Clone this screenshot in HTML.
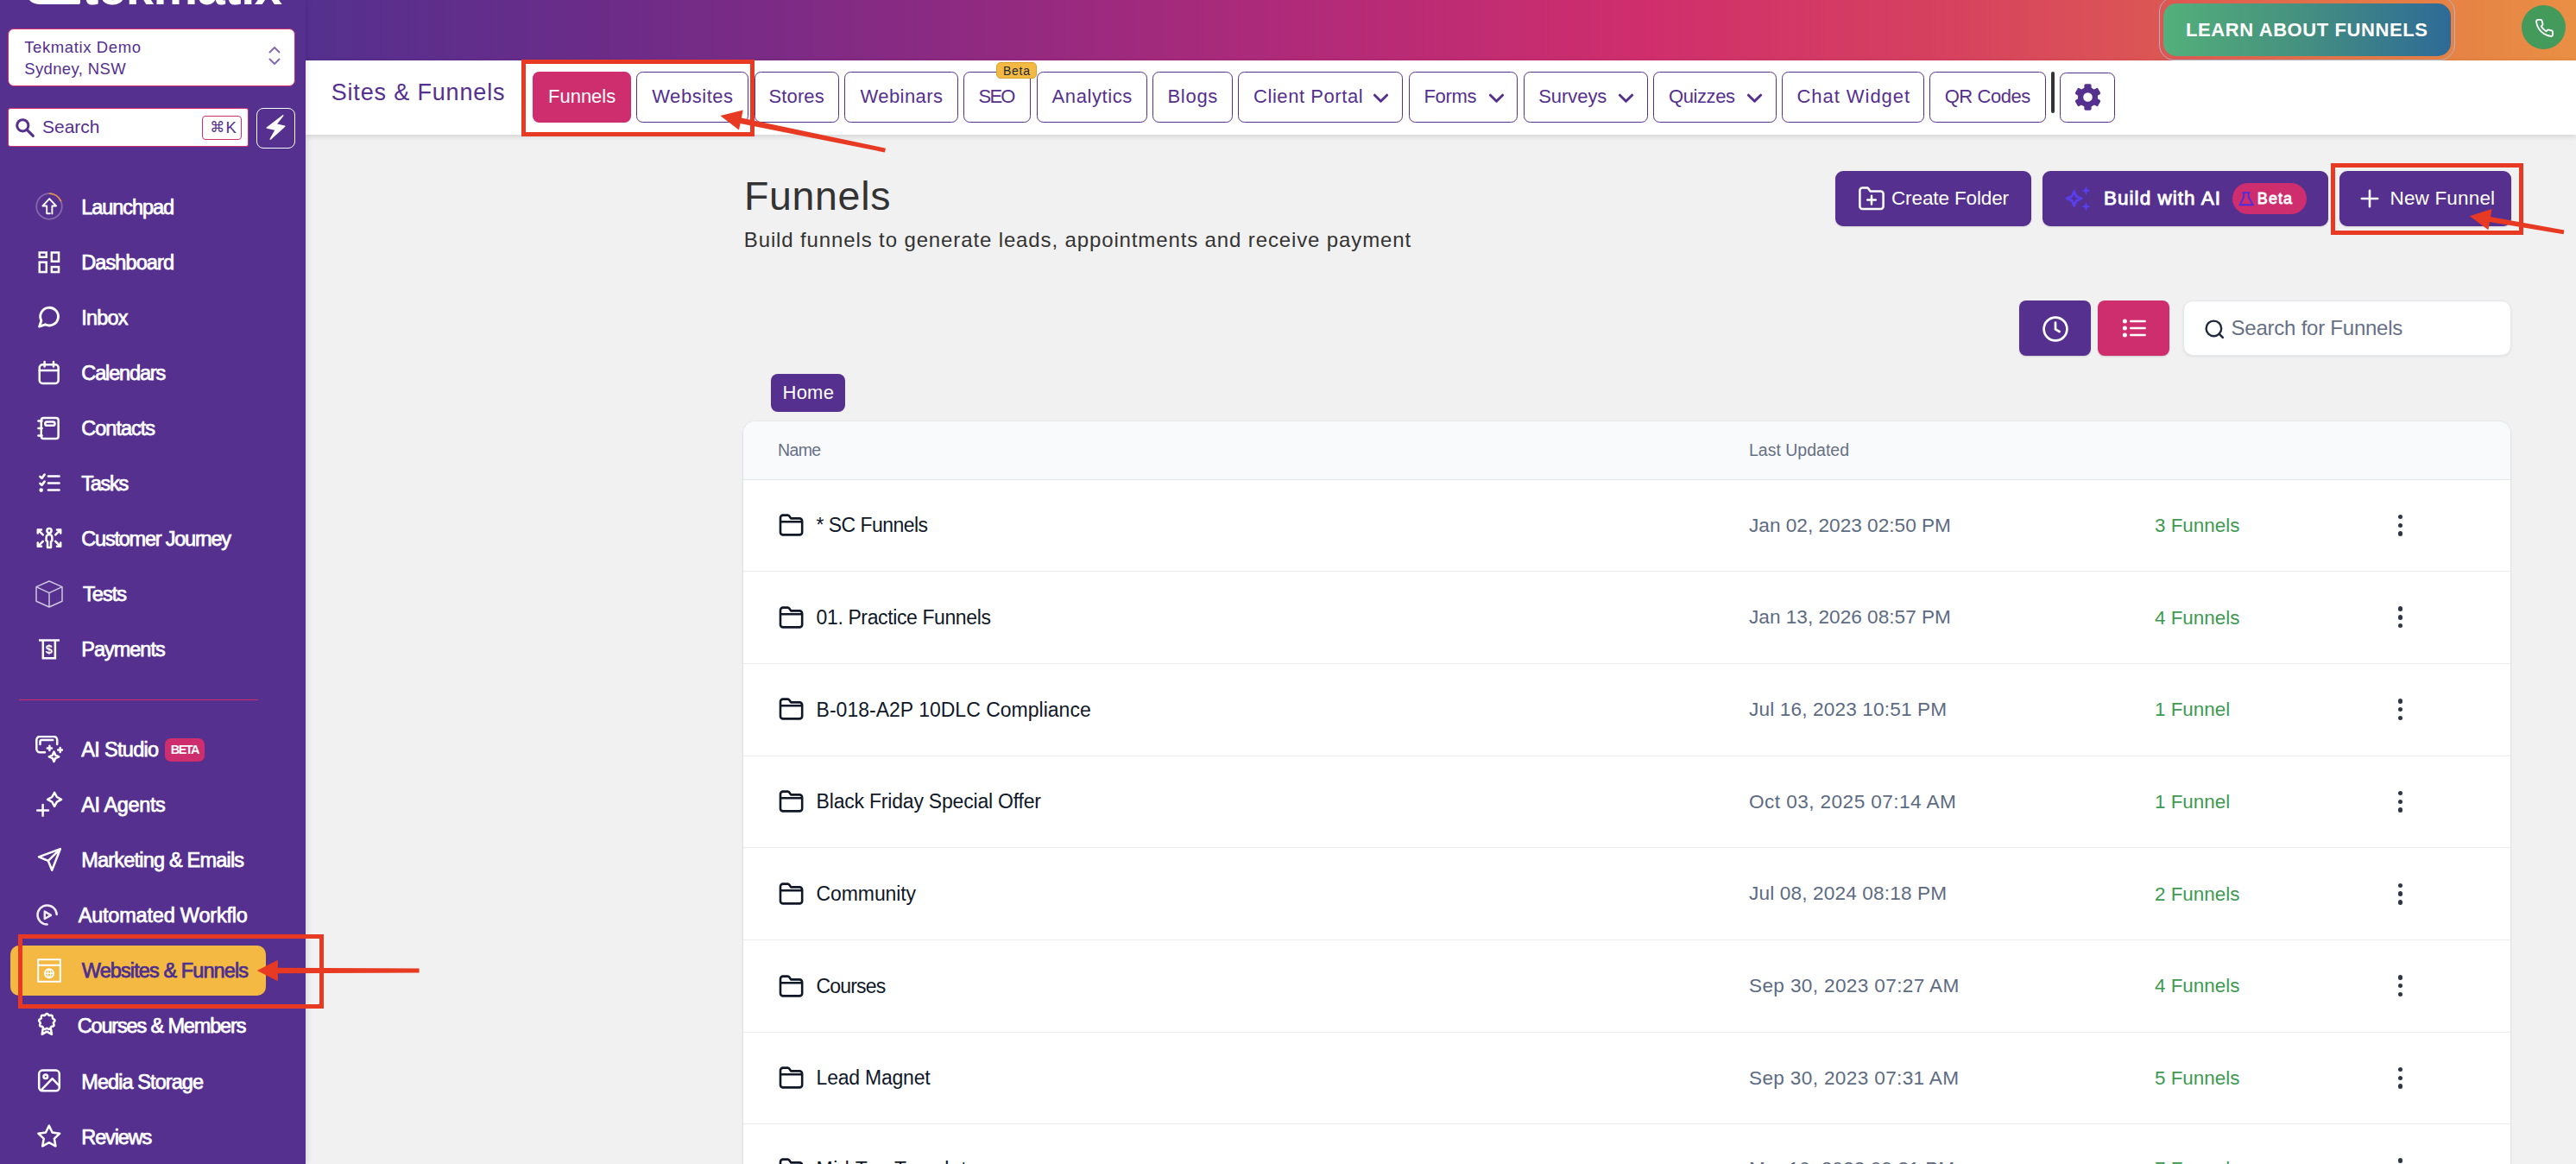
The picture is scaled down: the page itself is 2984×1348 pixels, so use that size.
<!DOCTYPE html>
<html lang="en"><head><meta charset="utf-8"><title>Funnels</title><style>
html,body{margin:0;padding:0}
body{width:2984px;height:1348px;overflow:hidden;position:relative;background:#f1f1f1;
font-family:"Liberation Sans",sans-serif}
.b{position:absolute;box-sizing:border-box;display:block}
.t{position:absolute;white-space:pre;display:block}
</style></head><body>
<div class="b" style="left:0.00px;top:0.00px;width:2984.00px;height:70.00px;background:linear-gradient(90deg,#55308e 0px,#55308e 354px,#6b2c88 700px,#8b2a82 1080px,#b02a79 1500px,#cf2e6c 1900px,#d6415f 2250px,#dc5654 2500px,#e47a46 2750px,#e98f44 2984px)"></div>
<div class="b" style="left:354.00px;top:70.00px;width:2630.00px;height:86.00px;background:#fff;box-shadow:0 2px 6px rgba(0,0,0,.13)"></div>
<div class="b" style="left:0.00px;top:0.00px;width:354.00px;height:1348.00px;background:#55308e;box-shadow:2px 0 6px rgba(0,0,0,.10)"></div>
<div class="b" style="left:30.00px;top:-20.00px;width:63.00px;height:25.20px;background:#fff;border-radius:0 0 2px 15px"></div>
<span class="t" style="left:95.00px;top:-43.80px;font-size:58px;line-height:58px;letter-spacing:-0.464px;color:#fff;font-weight:bold;">tekmatix</span>
<div class="b" style="left:9.00px;top:33.00px;width:333.20px;height:67.20px;background:#fff;border:1.5px solid #ce2d6e;border-radius:7px"></div>
<span class="t" style="left:28.20px;top:45.66px;font-size:18.5px;line-height:18.5px;letter-spacing:0.608px;color:#55308e;">Tekmatix Demo</span>
<span class="t" style="left:28.20px;top:71.06px;font-size:18.5px;line-height:18.5px;letter-spacing:0.365px;color:#55308e;">Sydney, NSW</span>
<svg class="b" style="left:309.00px;top:50.00px;" width="18.00" height="29.00" viewBox="0 0 18 29"><path d="M3.5 10.5 L9 5 L14.5 10.5 M3.5 18.5 L9 24 L14.5 18.5" fill="none" stroke="#8466b3" stroke-width="1.9" stroke-linecap="round" stroke-linejoin="round"/></svg>
<div class="b" style="left:9.00px;top:125.00px;width:279.20px;height:45.10px;background:#fff;border:1.5px solid #ce2d6e;border-radius:3px"></div>
<svg class="b" style="left:17.00px;top:135.50px;" width="24.00" height="24.00" viewBox="0 0 24 24"><circle cx="9.3" cy="9.3" r="6.6" fill="none" stroke="#55308e" stroke-width="3"/><path d="M14.3 14.3 L21.3 21.3" stroke="#55308e" stroke-width="3.2" stroke-linecap="round"/></svg>
<span class="t" style="left:49.00px;top:136.04px;font-size:21px;line-height:21px;letter-spacing:0.000px;color:#55308e;">Search</span>
<div class="b" style="left:234.00px;top:134.00px;width:46.00px;height:27.60px;border:1.3px solid #ce2d6e;border-radius:4px;background:#fff"></div>
<span class="t" style="left:243.2px;top:137.2px;font-size:17px;line-height:21px;color:#55308e;font-family:'DejaVu Sans',sans-serif">⌘</span>
<span class="t" style="left:261.60px;top:138.86px;font-size:18.5px;line-height:18.5px;letter-spacing:-1.050px;color:#55308e;">K</span>
<div class="b" style="left:297.00px;top:125.20px;width:44.70px;height:46.60px;border:1.5px solid #fff;border-radius:8px;background:#55308e"></div>
<svg class="b" style="left:306.00px;top:132.00px;" width="27.00" height="33.00" viewBox="0 0 27 33"><path d="M21.8 1.8 L3.2 16 L13.4 18.2 L7.2 29.2 L23.8 14.2 L13.8 12 Z" fill="#fff" stroke="#fff" stroke-width="1.4" stroke-linejoin="round"/></svg>
<div class="b" style="left:2501.00px;top:-4.00px;width:343.00px;height:74.00px;border:1.2px solid rgba(170,190,215,.85);border-radius:18px"></div>
<div class="b" style="left:2505.60px;top:4.20px;width:333.80px;height:61.00px;border-radius:15px;background:linear-gradient(90deg,#53b07b,#46927f 45%,#2e6a97)"></div>
<span class="t" style="left:2532.00px;top:23.75px;font-size:22px;line-height:22px;letter-spacing:0.597px;color:#fff;font-weight:bold;">LEARN ABOUT FUNNELS</span>
<div class="b" style="left:2921.00px;top:5.80px;width:51.20px;height:51.20px;border-radius:50%;background:#439a5b"></div>
<svg class="b" style="left:2935.60px;top:20.60px;" width="23.00" height="23.00" viewBox="0 0 24 24"><path d="M22 16.92v3a2 2 0 0 1-2.18 2 19.79 19.79 0 0 1-8.63-3.07 19.5 19.5 0 0 1-6-6 19.79 19.79 0 0 1-3.07-8.67A2 2 0 0 1 4.11 2h3a2 2 0 0 1 2 1.72 12.84 12.84 0 0 0 .7 2.81 2 2 0 0 1-.45 2.11L8.09 9.91a16 16 0 0 0 6 6l1.27-1.27a2 2 0 0 1 2.11-.45 12.84 12.84 0 0 0 2.81.7A2 2 0 0 1 22 16.92z" fill="none" stroke="#fff" stroke-width="1.9" stroke-linejoin="round" transform="rotate(0 12 12)"/></svg>
<div class="b" style="left:11.90px;top:1095.20px;width:296.10px;height:57.70px;background:#f4b942;border-radius:10px"></div>
<div class="b" style="left:22.00px;top:809.70px;width:277.00px;height:1.40px;background:#ce2d6e"></div>
<svg class="b" style="left:40.70px;top:223.20px;" width="32.00" height="32.00" viewBox="0 0 32 32"><circle cx="16" cy="16" r="14.8" fill="none" stroke="rgba(255,255,255,.28)" stroke-width="1.8"/><path d="M16 1.2 A14.8 14.8 0 0 1 29.6 10.2" fill="none" stroke="#e8913f" stroke-width="1.8"/><path d="M16.2 7.2 L8.4 15.5 H13.2 V24.3 H16.9 M16.2 7.2 L24 15.5 H19.4 V24.6" fill="none" stroke="#fff" stroke-width="1.9" stroke-linejoin="round" stroke-linecap="round"/></svg>
<svg class="b" style="left:40.70px;top:287.50px;" width="32.00" height="32.00" viewBox="0 0 32 32"><g fill="none" stroke="#fff" stroke-width="2.5" stroke-linecap="butt" stroke-linejoin="miter"><rect x="4.75" y="4.45" width="8" height="5.3"/><rect x="18.85" y="4.45" width="8.2" height="10.3"/><rect x="4.75" y="15.65" width="8" height="11.4"/><rect x="18.85" y="21.15" width="8.2" height="5.9"/></g></svg>
<svg class="b" style="left:40.70px;top:351.40px;" width="32.00" height="32.00" viewBox="0 0 32 32"><path transform="translate(2.3,1.8) scale(1.15)" d="M7.9 20A9 9 0 1 0 4 16.1L2 22Z" fill="none" stroke="#fff" stroke-width="2.5" stroke-linecap="round" stroke-linejoin="round" stroke-width="2.2"/></svg>
<svg class="b" style="left:40.70px;top:415.90px;" width="32.00" height="32.00" viewBox="0 0 32 32"><g fill="none" stroke="#fff" stroke-width="2.5" stroke-linecap="round" stroke-linejoin="round"><rect x="4.75" y="6.3" width="21.9" height="21.6" rx="3.5"/><path d="M4.75 13 H26.65 M10.6 3 V8.4 M21 3 V8.4"/></g></svg>
<svg class="b" style="left:40.70px;top:479.60px;" width="32.00" height="32.00" viewBox="0 0 32 32"><g fill="none" stroke="#fff" stroke-width="2.5" stroke-linecap="round" stroke-linejoin="round"><rect x="6.75" y="3.95" width="19.9" height="24.1" rx="2.8"/><path d="M3.4 7.6 H7.6 M3.4 16 H7.6 M3.4 24.4 H7.6"/><rect x="11.3" y="8.4" width="11.2" height="4.4" rx="2.1"/></g></svg>
<svg class="b" style="left:40.70px;top:543.70px;" width="32.00" height="32.00" viewBox="0 0 32 32"><g fill="none" stroke="#fff" stroke-width="2.5" stroke-linecap="round" stroke-linejoin="round" stroke-width="3"><path d="M14.9 7.5 H27.6 M14.9 15.5 H27.6 M14.9 23.6 H27.6"/><path d="M5.4 7.9 L7.4 9.9 L10.6 5.6 M5.4 15.9 L7.4 17.9 L10.6 13.6" stroke-width="2.6"/></g><circle cx="6.7" cy="23.6" r="2.3" fill="#fff"/></svg>
<svg class="b" style="left:40.70px;top:607.80px;" width="32.00" height="32.00" viewBox="0 0 32 32"><g fill="none" stroke="#fff" stroke-width="2.5" stroke-linecap="round" stroke-linejoin="round" stroke-width="2.3"><circle cx="16" cy="6.6" r="2.6"/><path d="M12.6 18.2 V14.4 A3.4 3.4 0 0 1 19.4 14.4 V18.2 L18 19 V26 H14 V19 Z"/><path d="M2.8 9.6 V5.4 H7 M2.8 5.4 L8.8 11.4 M29.2 9.6 V5.4 H25 M29.2 5.4 L23.2 11.4 M2.8 20.6 V24.8 H7 M2.8 24.8 L8.8 18.8 M29.2 20.6 V24.8 H25 M29.2 24.8 L23.2 18.8"/></g></svg>
<svg class="b" style="left:40.70px;top:672.10px;" width="32.00" height="32.00" viewBox="0 0 32 32"><path d="M16 1 L31 7.6 V24.2 L16 31 L1 24.2 V7.6 Z M1 7.6 L16 14.6 L31 7.6 M16 14.6 V31" fill="none" stroke="rgba(255,255,255,.72)" stroke-width="1.5" stroke-linejoin="round"/></svg>
<svg class="b" style="left:40.70px;top:736.00px;" width="32.00" height="32.00" viewBox="0 0 32 32"><g fill="none" stroke="#fff" stroke-width="2.5" stroke-linecap="butt" stroke-linejoin="miter"><path d="M4 5.4 H28 M8.8 5.4 V26.2 H22.9 V5.4"/></g><text x="15.9" y="20.8" font-family="Liberation Sans,sans-serif" font-weight="bold" font-size="14.5" text-anchor="middle" fill="#fff">$</text></svg>
<span class="t" style="left:94.30px;top:228.52px;font-size:23.5px;line-height:23.5px;letter-spacing:-1.069px;color:#fff;-webkit-text-stroke:0.75px #fff;">Launchpad</span>
<span class="t" style="left:94.30px;top:292.62px;font-size:23.5px;line-height:23.5px;letter-spacing:-0.912px;color:#fff;-webkit-text-stroke:0.75px #fff;">Dashboard</span>
<span class="t" style="left:94.30px;top:356.72px;font-size:23.5px;line-height:23.5px;letter-spacing:-0.850px;color:#fff;-webkit-text-stroke:0.75px #fff;">Inbox</span>
<span class="t" style="left:94.30px;top:420.82px;font-size:23.5px;line-height:23.5px;letter-spacing:-1.138px;color:#fff;-webkit-text-stroke:0.75px #fff;">Calendars</span>
<span class="t" style="left:94.30px;top:484.92px;font-size:23.5px;line-height:23.5px;letter-spacing:-1.007px;color:#fff;-webkit-text-stroke:0.75px #fff;">Contacts</span>
<span class="t" style="left:94.30px;top:549.02px;font-size:23.5px;line-height:23.5px;letter-spacing:-1.275px;color:#fff;-webkit-text-stroke:0.75px #fff;">Tasks</span>
<span class="t" style="left:94.30px;top:613.12px;font-size:23.5px;line-height:23.5px;letter-spacing:-1.220px;color:#fff;-webkit-text-stroke:0.75px #fff;">Customer Journey</span>
<span class="t" style="left:95.90px;top:677.22px;font-size:23.5px;line-height:23.5px;letter-spacing:-0.913px;color:#fff;-webkit-text-stroke:0.75px #fff;">Tests</span>
<span class="t" style="left:94.30px;top:741.32px;font-size:23.5px;line-height:23.5px;letter-spacing:-1.014px;color:#fff;-webkit-text-stroke:0.75px #fff;">Payments</span>
<svg class="b" style="left:40.70px;top:851.60px;" width="32.00" height="32.00" viewBox="0 0 32 32"><g fill="none" stroke="#fff" stroke-width="2.5" stroke-linecap="round" stroke-linejoin="round" stroke-width="1.75"><path d="M11 19.2 H5.3 A4 4 0 0 1 1.3 15.2 V4.9 A4 4 0 0 1 5.3 0.9 H21.2 A4 4 0 0 1 25.2 4.9 V10"/><path d="M20.2 5.1 H7.3 A1.8 1.8 0 0 0 5.5 6.9 V10"/><path d="M21.5 18.6 L23.2 22.6 L27.2 24.3 L23.2 26 L21.5 30 L19.8 26 L15.8 24.3 L19.8 22.6 Z"/><path d="M16.4 11.8 V17 M13.8 14.4 H19 M28.7 13.9 V19.1 M26.1 16.5 H31.3"/></g></svg>
<span class="t" style="left:94.30px;top:856.92px;font-size:23.5px;line-height:23.5px;letter-spacing:-0.694px;color:#fff;-webkit-text-stroke:0.75px #fff;">AI Studio</span>
<div class="b" style="left:191.20px;top:855.30px;width:45.40px;height:26.50px;background:#ce2d6e;border-radius:7px"></div>
<span class="t" style="left:197.80px;top:861.32px;font-size:14.5px;line-height:14.5px;letter-spacing:-1.567px;color:#fff;font-weight:bold;">BETA</span>
<svg class="b" style="left:40.70px;top:915.70px;" width="32.00" height="32.00" viewBox="0 0 32 32"><g fill="none" stroke="#fff" stroke-width="2.5" stroke-linecap="round" stroke-linejoin="round" stroke-width="2.5"><path d="M22.1 1.8 L24.9 7 L30.1 9.8 L24.9 12.6 L22.1 17.8 L19.3 12.6 L14.1 9.8 L19.3 7 Z"/><path d="M8.6 16 V28.8 M2.2 22.4 H15"/></g></svg>
<span class="t" style="left:94.30px;top:921.02px;font-size:23.5px;line-height:23.5px;letter-spacing:-0.388px;color:#fff;-webkit-text-stroke:0.75px #fff;">AI Agents</span>
<svg class="b" style="left:40.70px;top:979.80px;" width="32.00" height="32.00" viewBox="0 0 32 32"><path d="M28.8 3.2 L4 12.3 L14.8 16.8 L19.2 27.8 Z M28.8 3.2 L14.8 16.8" fill="none" stroke="#fff" stroke-width="2.5" stroke-linecap="round" stroke-linejoin="round" stroke-width="2.3"/></svg>
<span class="t" style="left:94.30px;top:985.12px;font-size:23.5px;line-height:23.5px;letter-spacing:-0.800px;color:#fff;-webkit-text-stroke:0.75px #fff;">Marketing &amp; Emails</span>
<svg class="b" style="left:38.70px;top:1043.90px;" width="32.00" height="32.00" viewBox="0 0 32 32"><g fill="none" stroke="#fff" stroke-width="2.5" stroke-linecap="round" stroke-linejoin="round" stroke-width="1.7" opacity=".92"><path d="M26.7 15 A11.1 11.1 0 1 0 15.6 26.6"/><path d="M12.8 11.6 L20 15.8 L12.8 20 Z"/></g></svg>
<span class="t" style="left:90.70px;top:1049.22px;font-size:23.5px;line-height:23.5px;letter-spacing:-0.200px;color:#fff;-webkit-text-stroke:0.75px #fff;">Automated Workflo</span>
<svg class="b" style="left:40.70px;top:1107.60px;" width="32.00" height="32.00" viewBox="0 0 32 32"><g fill="none" stroke="#fff" stroke-width="2"><rect x="3.2" y="3.2" width="25.6" height="25.6"/><path d="M3.2 9.8 H28.8"/><circle cx="16" cy="19.2" r="5"/><path d="M11 19.2 H21 M16 14.2 C13.4 17 13.4 21.4 16 24.2 C18.6 21.4 18.6 17 16 14.2" stroke-width="1.4"/></g></svg>
<span class="t" style="left:94.80px;top:1113.22px;font-size:23.5px;line-height:23.5px;letter-spacing:-0.906px;color:#4c2f91;-webkit-text-stroke:0.75px #4c2f91;">Websites &amp; Funnels</span>
<svg class="b" style="left:38.10px;top:1172.10px;" width="32.00" height="32.00" viewBox="0 0 32 32"><g fill="none" stroke="#fff" stroke-width="2.5" stroke-linecap="round" stroke-linejoin="round" stroke-width="2.1"><path d="M16.30 1.90 L16.78 2.00 L17.24 2.28 L17.65 2.68 L18.02 3.13 L18.35 3.54 L18.69 3.84 L19.06 4.00 L19.49 4.03 L19.99 3.95 L20.55 3.84 L21.13 3.77 L21.68 3.80 L22.15 3.98 L22.50 4.32 L22.71 4.79 L22.80 5.35 L22.81 5.93 L22.80 6.48 L22.83 6.96 L22.97 7.35 L23.24 7.66 L23.64 7.93 L24.12 8.20 L24.62 8.50 L25.06 8.85 L25.36 9.27 L25.48 9.75 L25.40 10.24 L25.15 10.74 L24.80 11.20 L24.43 11.63 L24.11 12.02 L23.91 12.41 L23.87 12.81 L23.96 13.25 L24.15 13.75 L24.35 14.29 L24.49 14.85 L24.51 15.38 L24.35 15.85 L24.03 16.22 L23.56 16.47 L23.00 16.63 L22.43 16.72 L21.91 16.81 L21.48 16.95 L21.15 17.19 L20.92 17.55 L20.73 18.02 L20.55 18.56 L20.32 19.10 L20.02 19.56 L19.63 19.87 L19.16 20.01 L18.65 19.96 L18.12 19.76 L17.61 19.47 L17.14 19.19 L16.71 18.98 L16.30 18.90 L15.89 18.98 L15.46 19.19 L14.99 19.47 L14.48 19.76 L13.95 19.96 L13.44 20.01 L12.97 19.87 L12.58 19.56 L12.28 19.10 L12.05 18.56 L11.87 18.02 L11.68 17.55 L11.45 17.19 L11.12 16.95 L10.69 16.81 L10.17 16.72 L9.60 16.63 L9.04 16.47 L8.57 16.22 L8.25 15.85 L8.09 15.38 L8.11 14.85 L8.25 14.29 L8.45 13.75 L8.64 13.25 L8.73 12.81 L8.69 12.41 L8.49 12.02 L8.17 11.63 L7.80 11.20 L7.45 10.74 L7.20 10.24 L7.12 9.75 L7.24 9.27 L7.54 8.85 L7.98 8.50 L8.48 8.20 L8.96 7.93 L9.36 7.66 L9.63 7.35 L9.77 6.96 L9.80 6.48 L9.79 5.93 L9.80 5.35 L9.89 4.79 L10.10 4.32 L10.45 3.98 L10.92 3.80 L11.47 3.77 L12.05 3.84 L12.61 3.95 L13.11 4.03 L13.54 4.00 L13.91 3.84 L14.25 3.54 L14.58 3.13 L14.95 2.68 L15.36 2.28 L15.82 2.00 Z"/><path d="M11.7 19.2 L10.7 25.8 L16.3 22.7 L21.9 25.8 L20.9 19.2"/></g></svg>
<span class="t" style="left:89.70px;top:1177.42px;font-size:23.5px;line-height:23.5px;letter-spacing:-1.153px;color:#fff;-webkit-text-stroke:0.75px #fff;">Courses &amp; Members</span>
<svg class="b" style="left:40.70px;top:1235.80px;" width="32.00" height="32.00" viewBox="0 0 32 32"><g fill="none" stroke="#fff" stroke-width="2.5" stroke-linecap="round" stroke-linejoin="round" stroke-width="2.3"><rect x="4.2" y="3.6" width="23.6" height="23.6" rx="4"/><circle cx="11.8" cy="10.8" r="2.3"/><path d="M7 26.2 L19.6 13.2 L27.6 21.4"/></g></svg>
<span class="t" style="left:94.30px;top:1241.52px;font-size:23.5px;line-height:23.5px;letter-spacing:-0.921px;color:#fff;-webkit-text-stroke:0.75px #fff;">Media Storage</span>
<svg class="b" style="left:40.70px;top:1300.30px;" width="32.00" height="32.00" viewBox="0 0 32 32"><path d="M15.8 3.6 L19.6 11.5 L28.2 12.7 L21.9 18.7 L23.4 27.3 L15.8 23.2 L8.2 27.3 L9.7 18.7 L3.4 12.7 L12 11.5 Z" fill="none" stroke="#fff" stroke-width="2.5" stroke-linecap="round" stroke-linejoin="round" stroke-width="2.3"/></svg>
<span class="t" style="left:94.30px;top:1305.62px;font-size:23.5px;line-height:23.5px;letter-spacing:-1.125px;color:#fff;-webkit-text-stroke:0.75px #fff;">Reviews</span>
<span class="t" style="left:383.70px;top:94.41px;font-size:27px;line-height:27px;letter-spacing:0.836px;color:#55308e;">Sites &amp; Funnels</span>
<div class="b" style="left:616.80px;top:83.00px;width:114.20px;height:59.00px;background:#ce2d6e;border-radius:7.5px"></div>
<span class="t" style="left:635.00px;top:100.55px;font-size:22px;line-height:22px;letter-spacing:-0.008px;color:#fff;">Funnels</span>
<div class="b" style="left:737.00px;top:83.00px;width:130.00px;height:59.00px;background:#fff;border:1.4px solid #55308e;border-radius:7.5px"></div>
<span class="t" style="left:755.20px;top:100.55px;font-size:22px;line-height:22px;letter-spacing:0.543px;color:#55308e;">Websites</span>
<div class="b" style="left:873.50px;top:83.00px;width:98.30px;height:59.00px;background:#fff;border:1.4px solid #55308e;border-radius:7.5px"></div>
<span class="t" style="left:890.50px;top:100.55px;font-size:22px;line-height:22px;letter-spacing:0.120px;color:#55308e;">Stores</span>
<div class="b" style="left:977.90px;top:83.00px;width:132.10px;height:59.00px;background:#fff;border:1.4px solid #55308e;border-radius:7.5px"></div>
<span class="t" style="left:996.50px;top:100.55px;font-size:22px;line-height:22px;letter-spacing:0.429px;color:#55308e;">Webinars</span>
<div class="b" style="left:1116.10px;top:83.00px;width:78.00px;height:59.00px;background:#fff;border:1.4px solid #55308e;border-radius:7.5px"></div>
<span class="t" style="left:1133.60px;top:100.55px;font-size:22px;line-height:22px;letter-spacing:-1.850px;color:#55308e;">SEO</span>
<div class="b" style="left:1201.00px;top:83.00px;width:127.80px;height:59.00px;background:#fff;border:1.4px solid #55308e;border-radius:7.5px"></div>
<span class="t" style="left:1218.60px;top:100.55px;font-size:22px;line-height:22px;letter-spacing:0.588px;color:#55308e;">Analytics</span>
<div class="b" style="left:1335.00px;top:83.00px;width:93.00px;height:59.00px;background:#fff;border:1.4px solid #55308e;border-radius:7.5px"></div>
<span class="t" style="left:1352.50px;top:100.55px;font-size:22px;line-height:22px;letter-spacing:0.700px;color:#55308e;">Blogs</span>
<div class="b" style="left:1434.00px;top:83.00px;width:191.00px;height:59.00px;background:#fff;border:1.4px solid #55308e;border-radius:7.5px"></div>
<span class="t" style="left:1452.00px;top:100.55px;font-size:22px;line-height:22px;letter-spacing:0.562px;color:#55308e;">Client Portal</span>
<svg class="b" style="left:1589.30px;top:106.00px;" width="21.00" height="15.00" viewBox="0 0 21 15"><path d="M3.4 4.2 L10.5 11.2 L17.6 4.2" fill="none" stroke="#55308e" stroke-width="3" stroke-linecap="round" stroke-linejoin="round"/></svg>
<div class="b" style="left:1632.00px;top:83.00px;width:126.00px;height:59.00px;background:#fff;border:1.4px solid #55308e;border-radius:7.5px"></div>
<span class="t" style="left:1649.40px;top:100.55px;font-size:22px;line-height:22px;letter-spacing:-0.312px;color:#55308e;">Forms</span>
<svg class="b" style="left:1722.60px;top:106.00px;" width="21.00" height="15.00" viewBox="0 0 21 15"><path d="M3.4 4.2 L10.5 11.2 L17.6 4.2" fill="none" stroke="#55308e" stroke-width="3" stroke-linecap="round" stroke-linejoin="round"/></svg>
<div class="b" style="left:1765.00px;top:83.00px;width:144.00px;height:59.00px;background:#fff;border:1.4px solid #55308e;border-radius:7.5px"></div>
<span class="t" style="left:1782.20px;top:100.55px;font-size:22px;line-height:22px;letter-spacing:-0.050px;color:#55308e;">Surveys</span>
<svg class="b" style="left:1873.30px;top:106.00px;" width="21.00" height="15.00" viewBox="0 0 21 15"><path d="M3.4 4.2 L10.5 11.2 L17.6 4.2" fill="none" stroke="#55308e" stroke-width="3" stroke-linecap="round" stroke-linejoin="round"/></svg>
<div class="b" style="left:1915.00px;top:83.00px;width:142.70px;height:59.00px;background:#fff;border:1.4px solid #55308e;border-radius:7.5px"></div>
<span class="t" style="left:1933.00px;top:100.55px;font-size:22px;line-height:22px;letter-spacing:-0.417px;color:#55308e;">Quizzes</span>
<svg class="b" style="left:2022.00px;top:106.00px;" width="21.00" height="15.00" viewBox="0 0 21 15"><path d="M3.4 4.2 L10.5 11.2 L17.6 4.2" fill="none" stroke="#55308e" stroke-width="3" stroke-linecap="round" stroke-linejoin="round"/></svg>
<div class="b" style="left:2064.00px;top:83.00px;width:164.70px;height:59.00px;background:#fff;border:1.4px solid #55308e;border-radius:7.5px"></div>
<span class="t" style="left:2081.50px;top:100.55px;font-size:22px;line-height:22px;letter-spacing:0.950px;color:#55308e;">Chat Widget</span>
<div class="b" style="left:2234.80px;top:83.00px;width:135.20px;height:59.00px;background:#fff;border:1.4px solid #55308e;border-radius:7.5px"></div>
<span class="t" style="left:2252.70px;top:100.55px;font-size:22px;line-height:22px;letter-spacing:-0.436px;color:#55308e;">QR Codes</span>
<div class="b" style="left:1154.00px;top:72.00px;width:46.70px;height:18.70px;background:#f4b942;border:1.2px solid #d9a030;border-radius:5px"></div>
<span class="t" style="left:1162.00px;top:74.96px;font-size:14px;line-height:14px;letter-spacing:0.733px;color:#1f2937;">Beta</span>
<div class="b" style="left:2376.00px;top:83.10px;width:4.20px;height:48.20px;background:#333;border-radius:2px"></div>
<div class="b" style="left:2386.00px;top:83.80px;width:63.80px;height:58.20px;background:#fff;border:1.4px solid #55308e;border-radius:7.5px"></div>
<svg class="b" style="left:2403.00px;top:97.20px;" width="31.00" height="31.00" viewBox="-15.5 -15.5 31 31"><rect x="-4.1" y="-15.2" width="8.2" height="8" rx="1.6" transform="rotate(0)" fill="#55308e"/><rect x="-4.1" y="-15.2" width="8.2" height="8" rx="1.6" transform="rotate(60)" fill="#55308e"/><rect x="-4.1" y="-15.2" width="8.2" height="8" rx="1.6" transform="rotate(120)" fill="#55308e"/><rect x="-4.1" y="-15.2" width="8.2" height="8" rx="1.6" transform="rotate(180)" fill="#55308e"/><rect x="-4.1" y="-15.2" width="8.2" height="8" rx="1.6" transform="rotate(240)" fill="#55308e"/><rect x="-4.1" y="-15.2" width="8.2" height="8" rx="1.6" transform="rotate(300)" fill="#55308e"/><circle r="8.4" fill="none" stroke="#55308e" stroke-width="6.2"/></svg>
<span class="t" style="left:861.90px;top:204.28px;font-size:46.5px;line-height:46.5px;letter-spacing:0.683px;color:#333;">Funnels</span>
<span class="t" style="left:861.80px;top:265.78px;font-size:24px;line-height:24px;letter-spacing:0.873px;color:#333;">Build funnels to generate leads, appointments and receive payment</span>
<div class="b" style="left:2126.00px;top:198.00px;width:227.30px;height:64.00px;background:#55308e;border-radius:9px;box-shadow:0 1px 2px rgba(0,0,0,.12)"></div>
<svg class="b" style="left:2152.00px;top:215.00px;" width="32.00" height="30.00" viewBox="0 0 32 30"><g fill="none" stroke="#fff" stroke-width="2.5" stroke-linecap="round" stroke-linejoin="round"><path d="M2.4 24 V5.4 A3 3 0 0 1 5.4 2.4 H11.6 L14.6 6.6 H26.6 A3 3 0 0 1 29.6 9.6 V24 A3 3 0 0 1 26.6 27 H5.4 A3 3 0 0 1 2.4 24 Z"/><path d="M16 11.8 V21.4 M11.2 16.6 H20.8"/></g></svg>
<span class="t" style="left:2191.00px;top:219.31px;font-size:22.5px;line-height:22.5px;letter-spacing:-0.125px;color:#fff;">Create Folder</span>
<div class="b" style="left:2366.00px;top:198.00px;width:331.00px;height:64.00px;background:#55308e;border-radius:9px;box-shadow:0 1px 2px rgba(0,0,0,.12)"></div>
<svg class="b" style="left:2390.00px;top:213.00px;" width="34.00" height="34.00" viewBox="0 0 34 34"><path d="M12.70 8.50 L15.19 14.41 L21.10 16.90 L15.19 19.39 L12.70 25.30 L10.21 19.39 L4.30 16.90 L10.21 14.41 Z" fill="none" stroke="#583fee" stroke-width="2.8" stroke-linejoin="round"/><path d="M26.40 2.50 L27.80 6.30 L31.60 7.70 L27.80 9.10 L26.40 12.90 L25.00 9.10 L21.20 7.70 L25.00 6.30 Z M26.40 21.00 L27.80 24.80 L31.60 26.20 L27.80 27.60 L26.40 31.40 L25.00 27.60 L21.20 26.20 L25.00 24.80 Z" fill="#583fee"/></svg>
<span class="t" style="left:2437.00px;top:219.31px;font-size:22.5px;line-height:22.5px;letter-spacing:1.033px;color:#fff;-webkit-text-stroke:0.9px #fff;">Build with AI</span>
<div class="b" style="left:2585.60px;top:211.90px;width:86.40px;height:36.00px;background:#ce2d6e;border-radius:18px"></div>
<svg class="b" style="left:2592.50px;top:220.50px;" width="18.00" height="20.00" viewBox="0 0 18 20"><path d="M4.4 2.1 H13.4 M6.1 2.1 V7.4 L1.7 16.2 H16.9 L11.7 7.4 V2.1" fill="none" stroke="#4a2fe0" stroke-width="1.9" stroke-linecap="butt" stroke-linejoin="miter"/></svg>
<span class="t" style="left:2614.80px;top:220.91px;font-size:18px;line-height:18px;letter-spacing:1.083px;color:#fff;-webkit-text-stroke:0.8px #fff;">Beta</span>
<div class="b" style="left:2709.80px;top:198.00px;width:199.20px;height:64.00px;background:#55308e;border-radius:9px;box-shadow:0 1px 2px rgba(0,0,0,.12)"></div>
<svg class="b" style="left:2732.00px;top:217.30px;" width="26.00" height="26.00" viewBox="0 0 26 26"><path d="M13 3.8 V22.2 M3.8 13 H22.2" stroke="#fff" stroke-width="2.6" stroke-linecap="round"/></svg>
<span class="t" style="left:2768.50px;top:219.31px;font-size:22.5px;line-height:22.5px;letter-spacing:0.167px;color:#fff;">New Funnel</span>
<div class="b" style="left:2339.00px;top:347.90px;width:83.00px;height:64.00px;background:#55308e;border-radius:8px;box-shadow:0 1px 2px rgba(0,0,0,.15)"></div>
<svg class="b" style="left:2365.00px;top:364.50px;" width="32.00" height="32.00" viewBox="0 0 32 32"><g fill="none" stroke="#fff" stroke-width="2.7" stroke-linecap="round" stroke-linejoin="round"><circle cx="16" cy="16" r="13.4"/><path d="M16 8.6 V16.4 L20.6 19"/></g></svg>
<div class="b" style="left:2430.00px;top:347.90px;width:83.00px;height:64.00px;background:#ce2d6e;border-radius:8px;box-shadow:0 1px 2px rgba(0,0,0,.15)"></div>
<svg class="b" style="left:2456.80px;top:365.30px;" width="32.00" height="30.00" viewBox="0 0 32 30"><path d="M11.2 7 H27.6 M11.2 15 H27.6 M11.2 23 H27.6" stroke="#fff" stroke-width="2.6" stroke-linecap="round"/><circle cx="4.4" cy="7" r="2.5" fill="#fff"/><circle cx="4.4" cy="15" r="2.5" fill="#fff"/><circle cx="4.4" cy="23" r="2.5" fill="#fff"/></svg>
<div class="b" style="left:2529.40px;top:347.90px;width:379.20px;height:63.70px;background:#fff;border:1px solid #e4e7ec;border-radius:11px;box-shadow:0 1px 3px rgba(16,24,40,.08)"></div>
<svg class="b" style="left:2552.00px;top:368.00px;" width="26.00" height="26.00" viewBox="0 0 26 26"><circle cx="12.4" cy="12.4" r="8.8" fill="none" stroke="#202b3d" stroke-width="2.4"/><path d="M18.6 18.6 L22.8 22.8" stroke="#202b3d" stroke-width="2.6" stroke-linecap="round"/></svg>
<span class="t" style="left:2584.60px;top:368.38px;font-size:24px;line-height:24px;letter-spacing:-0.238px;color:#667085;">Search for Funnels</span>
<div class="b" style="left:892.80px;top:433.00px;width:86.00px;height:43.80px;background:#55308e;border-radius:8px"></div>
<span class="t" style="left:906.50px;top:443.75px;font-size:22px;line-height:22px;letter-spacing:0.250px;color:#fff;">Home</span>
<div class="b" style="left:861.00px;top:487.80px;width:2047.30px;height:912.20px;background:#fff;border-radius:14px;box-shadow:0 1px 3px rgba(16,24,40,.10),0 0 0 1px rgba(16,24,40,.03)"></div>
<div class="b" style="left:861.00px;top:487.80px;width:2047.30px;height:68.20px;background:#f9fafb;border-radius:14px 14px 0 0;border-bottom:1px solid #e4e7ec"></div>
<span class="t" style="left:900.90px;top:511.67px;font-size:19.5px;line-height:19.5px;letter-spacing:-0.567px;color:#667085;">Name</span>
<span class="t" style="left:2026.00px;top:511.67px;font-size:19.5px;line-height:19.5px;letter-spacing:0.000px;color:#667085;">Last Updated</span>
<svg class="b" style="left:901.40px;top:593.10px;" width="31.20" height="30.00" viewBox="0 0 31.2 30"><path d="M3 23.4 V6.6 A3 3 0 0 1 6 3.6 H11.4 A2.4 2.4 0 0 1 13.4 4.7 L15.2 7.4 H25.2 A3 3 0 0 1 28.2 10.4 V23.4 A3 3 0 0 1 25.2 26.4 H6 A3 3 0 0 1 3 23.4 Z M3 11.2 H28.2" fill="none" stroke="#101828" stroke-width="2.6" stroke-linecap="round" stroke-linejoin="round"/></svg>
<span class="t" style="left:945.60px;top:597.36px;font-size:23px;line-height:23px;letter-spacing:-0.555px;color:#101828;">* SC Funnels</span>
<span class="t" style="left:2026.00px;top:597.76px;font-size:22.6px;line-height:22.6px;letter-spacing:0.013px;color:#5d6b82;">Jan 02, 2023 02:50 PM</span>
<span class="t" style="left:2496.00px;top:597.86px;font-size:22.4px;line-height:22.4px;letter-spacing:0.000px;color:#3d9a50;">3 Funnels</span>
<div class="b" style="left:2777.80px;top:595.80px;width:5.40px;height:5.40px;background:#2d3748;border-radius:50%"></div>
<div class="b" style="left:2777.80px;top:605.60px;width:5.40px;height:5.40px;background:#2d3748;border-radius:50%"></div>
<div class="b" style="left:2777.80px;top:615.40px;width:5.40px;height:5.40px;background:#2d3748;border-radius:50%"></div>
<div class="b" style="left:861.00px;top:661.18px;width:2047.30px;height:1.20px;background:#eaecf0"></div>
<svg class="b" style="left:901.40px;top:699.78px;" width="31.20" height="30.00" viewBox="0 0 31.2 30"><path d="M3 23.4 V6.6 A3 3 0 0 1 6 3.6 H11.4 A2.4 2.4 0 0 1 13.4 4.7 L15.2 7.4 H25.2 A3 3 0 0 1 28.2 10.4 V23.4 A3 3 0 0 1 25.2 26.4 H6 A3 3 0 0 1 3 23.4 Z M3 11.2 H28.2" fill="none" stroke="#101828" stroke-width="2.6" stroke-linecap="round" stroke-linejoin="round"/></svg>
<span class="t" style="left:945.60px;top:704.04px;font-size:23px;line-height:23px;letter-spacing:-0.387px;color:#101828;">01. Practice Funnels</span>
<span class="t" style="left:2026.00px;top:704.44px;font-size:22.6px;line-height:22.6px;letter-spacing:0.013px;color:#5d6b82;">Jan 13, 2026 08:57 PM</span>
<span class="t" style="left:2496.00px;top:704.54px;font-size:22.4px;line-height:22.4px;letter-spacing:0.000px;color:#3d9a50;">4 Funnels</span>
<div class="b" style="left:2777.80px;top:702.48px;width:5.40px;height:5.40px;background:#2d3748;border-radius:50%"></div>
<div class="b" style="left:2777.80px;top:712.28px;width:5.40px;height:5.40px;background:#2d3748;border-radius:50%"></div>
<div class="b" style="left:2777.80px;top:722.08px;width:5.40px;height:5.40px;background:#2d3748;border-radius:50%"></div>
<div class="b" style="left:861.00px;top:767.86px;width:2047.30px;height:1.20px;background:#eaecf0"></div>
<svg class="b" style="left:901.40px;top:806.46px;" width="31.20" height="30.00" viewBox="0 0 31.2 30"><path d="M3 23.4 V6.6 A3 3 0 0 1 6 3.6 H11.4 A2.4 2.4 0 0 1 13.4 4.7 L15.2 7.4 H25.2 A3 3 0 0 1 28.2 10.4 V23.4 A3 3 0 0 1 25.2 26.4 H6 A3 3 0 0 1 3 23.4 Z M3 11.2 H28.2" fill="none" stroke="#101828" stroke-width="2.6" stroke-linecap="round" stroke-linejoin="round"/></svg>
<span class="t" style="left:945.60px;top:810.72px;font-size:23px;line-height:23px;letter-spacing:0.008px;color:#101828;">B-018-A2P 10DLC Compliance</span>
<span class="t" style="left:2026.00px;top:811.12px;font-size:22.6px;line-height:22.6px;letter-spacing:0.153px;color:#5d6b82;">Jul 16, 2023 10:51 PM</span>
<span class="t" style="left:2496.00px;top:811.22px;font-size:22.4px;line-height:22.4px;letter-spacing:0.000px;color:#3d9a50;">1 Funnel</span>
<div class="b" style="left:2777.80px;top:809.16px;width:5.40px;height:5.40px;background:#2d3748;border-radius:50%"></div>
<div class="b" style="left:2777.80px;top:818.96px;width:5.40px;height:5.40px;background:#2d3748;border-radius:50%"></div>
<div class="b" style="left:2777.80px;top:828.76px;width:5.40px;height:5.40px;background:#2d3748;border-radius:50%"></div>
<div class="b" style="left:861.00px;top:874.54px;width:2047.30px;height:1.20px;background:#eaecf0"></div>
<svg class="b" style="left:901.40px;top:913.14px;" width="31.20" height="30.00" viewBox="0 0 31.2 30"><path d="M3 23.4 V6.6 A3 3 0 0 1 6 3.6 H11.4 A2.4 2.4 0 0 1 13.4 4.7 L15.2 7.4 H25.2 A3 3 0 0 1 28.2 10.4 V23.4 A3 3 0 0 1 25.2 26.4 H6 A3 3 0 0 1 3 23.4 Z M3 11.2 H28.2" fill="none" stroke="#101828" stroke-width="2.6" stroke-linecap="round" stroke-linejoin="round"/></svg>
<span class="t" style="left:945.60px;top:917.40px;font-size:23px;line-height:23px;letter-spacing:-0.204px;color:#101828;">Black Friday Special Offer</span>
<span class="t" style="left:2026.00px;top:917.80px;font-size:22.6px;line-height:22.6px;letter-spacing:0.438px;color:#5d6b82;">Oct 03, 2025 07:14 AM</span>
<span class="t" style="left:2496.00px;top:917.90px;font-size:22.4px;line-height:22.4px;letter-spacing:0.000px;color:#3d9a50;">1 Funnel</span>
<div class="b" style="left:2777.80px;top:915.84px;width:5.40px;height:5.40px;background:#2d3748;border-radius:50%"></div>
<div class="b" style="left:2777.80px;top:925.64px;width:5.40px;height:5.40px;background:#2d3748;border-radius:50%"></div>
<div class="b" style="left:2777.80px;top:935.44px;width:5.40px;height:5.40px;background:#2d3748;border-radius:50%"></div>
<div class="b" style="left:861.00px;top:981.22px;width:2047.30px;height:1.20px;background:#eaecf0"></div>
<svg class="b" style="left:901.40px;top:1019.82px;" width="31.20" height="30.00" viewBox="0 0 31.2 30"><path d="M3 23.4 V6.6 A3 3 0 0 1 6 3.6 H11.4 A2.4 2.4 0 0 1 13.4 4.7 L15.2 7.4 H25.2 A3 3 0 0 1 28.2 10.4 V23.4 A3 3 0 0 1 25.2 26.4 H6 A3 3 0 0 1 3 23.4 Z M3 11.2 H28.2" fill="none" stroke="#101828" stroke-width="2.6" stroke-linecap="round" stroke-linejoin="round"/></svg>
<span class="t" style="left:945.60px;top:1024.08px;font-size:23px;line-height:23px;letter-spacing:-0.106px;color:#101828;">Community</span>
<span class="t" style="left:2026.00px;top:1024.48px;font-size:22.6px;line-height:22.6px;letter-spacing:0.153px;color:#5d6b82;">Jul 08, 2024 08:18 PM</span>
<span class="t" style="left:2496.00px;top:1024.58px;font-size:22.4px;line-height:22.4px;letter-spacing:0.000px;color:#3d9a50;">2 Funnels</span>
<div class="b" style="left:2777.80px;top:1022.52px;width:5.40px;height:5.40px;background:#2d3748;border-radius:50%"></div>
<div class="b" style="left:2777.80px;top:1032.32px;width:5.40px;height:5.40px;background:#2d3748;border-radius:50%"></div>
<div class="b" style="left:2777.80px;top:1042.12px;width:5.40px;height:5.40px;background:#2d3748;border-radius:50%"></div>
<div class="b" style="left:861.00px;top:1087.90px;width:2047.30px;height:1.20px;background:#eaecf0"></div>
<svg class="b" style="left:901.40px;top:1126.50px;" width="31.20" height="30.00" viewBox="0 0 31.2 30"><path d="M3 23.4 V6.6 A3 3 0 0 1 6 3.6 H11.4 A2.4 2.4 0 0 1 13.4 4.7 L15.2 7.4 H25.2 A3 3 0 0 1 28.2 10.4 V23.4 A3 3 0 0 1 25.2 26.4 H6 A3 3 0 0 1 3 23.4 Z M3 11.2 H28.2" fill="none" stroke="#101828" stroke-width="2.6" stroke-linecap="round" stroke-linejoin="round"/></svg>
<span class="t" style="left:945.60px;top:1130.76px;font-size:23px;line-height:23px;letter-spacing:-0.842px;color:#101828;">Courses</span>
<span class="t" style="left:2026.00px;top:1131.16px;font-size:22.6px;line-height:22.6px;letter-spacing:0.353px;color:#5d6b82;">Sep 30, 2023 07:27 AM</span>
<span class="t" style="left:2496.00px;top:1131.26px;font-size:22.4px;line-height:22.4px;letter-spacing:0.000px;color:#3d9a50;">4 Funnels</span>
<div class="b" style="left:2777.80px;top:1129.20px;width:5.40px;height:5.40px;background:#2d3748;border-radius:50%"></div>
<div class="b" style="left:2777.80px;top:1139.00px;width:5.40px;height:5.40px;background:#2d3748;border-radius:50%"></div>
<div class="b" style="left:2777.80px;top:1148.80px;width:5.40px;height:5.40px;background:#2d3748;border-radius:50%"></div>
<div class="b" style="left:861.00px;top:1194.58px;width:2047.30px;height:1.20px;background:#eaecf0"></div>
<svg class="b" style="left:901.40px;top:1233.18px;" width="31.20" height="30.00" viewBox="0 0 31.2 30"><path d="M3 23.4 V6.6 A3 3 0 0 1 6 3.6 H11.4 A2.4 2.4 0 0 1 13.4 4.7 L15.2 7.4 H25.2 A3 3 0 0 1 28.2 10.4 V23.4 A3 3 0 0 1 25.2 26.4 H6 A3 3 0 0 1 3 23.4 Z M3 11.2 H28.2" fill="none" stroke="#101828" stroke-width="2.6" stroke-linecap="round" stroke-linejoin="round"/></svg>
<span class="t" style="left:945.60px;top:1237.44px;font-size:23px;line-height:23px;letter-spacing:-0.225px;color:#101828;">Lead Magnet</span>
<span class="t" style="left:2026.00px;top:1237.84px;font-size:22.6px;line-height:22.6px;letter-spacing:0.347px;color:#5d6b82;">Sep 30, 2023 07:31 AM</span>
<span class="t" style="left:2496.00px;top:1237.94px;font-size:22.4px;line-height:22.4px;letter-spacing:0.000px;color:#3d9a50;">5 Funnels</span>
<div class="b" style="left:2777.80px;top:1235.88px;width:5.40px;height:5.40px;background:#2d3748;border-radius:50%"></div>
<div class="b" style="left:2777.80px;top:1245.68px;width:5.40px;height:5.40px;background:#2d3748;border-radius:50%"></div>
<div class="b" style="left:2777.80px;top:1255.48px;width:5.40px;height:5.40px;background:#2d3748;border-radius:50%"></div>
<div class="b" style="left:861.00px;top:1301.26px;width:2047.30px;height:1.20px;background:#eaecf0"></div>
<svg class="b" style="left:901.40px;top:1338.66px;" width="31.20" height="30.00" viewBox="0 0 31.2 30"><path d="M3 23.4 V6.6 A3 3 0 0 1 6 3.6 H11.4 A2.4 2.4 0 0 1 13.4 4.7 L15.2 7.4 H25.2 A3 3 0 0 1 28.2 10.4 V23.4 A3 3 0 0 1 25.2 26.4 H6 A3 3 0 0 1 3 23.4 Z M3 11.2 H28.2" fill="none" stroke="#101828" stroke-width="2.6" stroke-linecap="round" stroke-linejoin="round"/></svg>
<span class="t" style="left:945.60px;top:1342.92px;font-size:23px;line-height:23px;letter-spacing:0.527px;color:#101828;">Mid Top Template</span>
<span class="t" style="left:2026.00px;top:1343.32px;font-size:22.6px;line-height:22.6px;letter-spacing:0.100px;color:#5d6b82;">Mar 10, 2023 09:31 PM</span>
<span class="t" style="left:2496.00px;top:1343.42px;font-size:22.4px;line-height:22.4px;letter-spacing:0.000px;color:#3d9a50;">7 Funnels</span>
<div class="b" style="left:2777.80px;top:1341.36px;width:5.40px;height:5.40px;background:#2d3748;border-radius:50%"></div>
<div class="b" style="left:2777.80px;top:1351.16px;width:5.40px;height:5.40px;background:#2d3748;border-radius:50%"></div>
<div class="b" style="left:2777.80px;top:1360.96px;width:5.40px;height:5.40px;background:#2d3748;border-radius:50%"></div>
<div class="b" style="left:604.20px;top:69.30px;width:269.80px;height:88.50px;border:5px solid #e83a23"></div>
<div class="b" style="left:2700.00px;top:189.00px;width:223.00px;height:83.00px;border:5px solid #e83a23"></div>
<div class="b" style="left:21.10px;top:1081.80px;width:353.60px;height:86.20px;border:5px solid #e83a23"></div>
<svg class="b" style="left:0.00px;top:0.00px;pointer-events:none" width="2984.00" height="1348.00" viewBox="0 0 2984 1348"><g fill="#e83a23" stroke="none"><path d="M1025.9 171.7 L1024.9 176.5 L855 142.6 L856.4 136 Z"/><path d="M834.4 134 L860.7 127.4 L856 150.6 Z"/><path d="M2970.4 266.4 L2969.6 271.2 L2881 256.6 L2882 250.6 Z"/><path d="M2860.8 250.3 L2886.6 241.9 L2882.4 266.2 Z"/><path d="M485.6 1121.6 L485.6 1126.6 L320 1127.2 L320 1120.8 Z"/><path d="M297.7 1124 L321.8 1111.8 L321.8 1136.2 Z"/></g></svg>
</body></html>
